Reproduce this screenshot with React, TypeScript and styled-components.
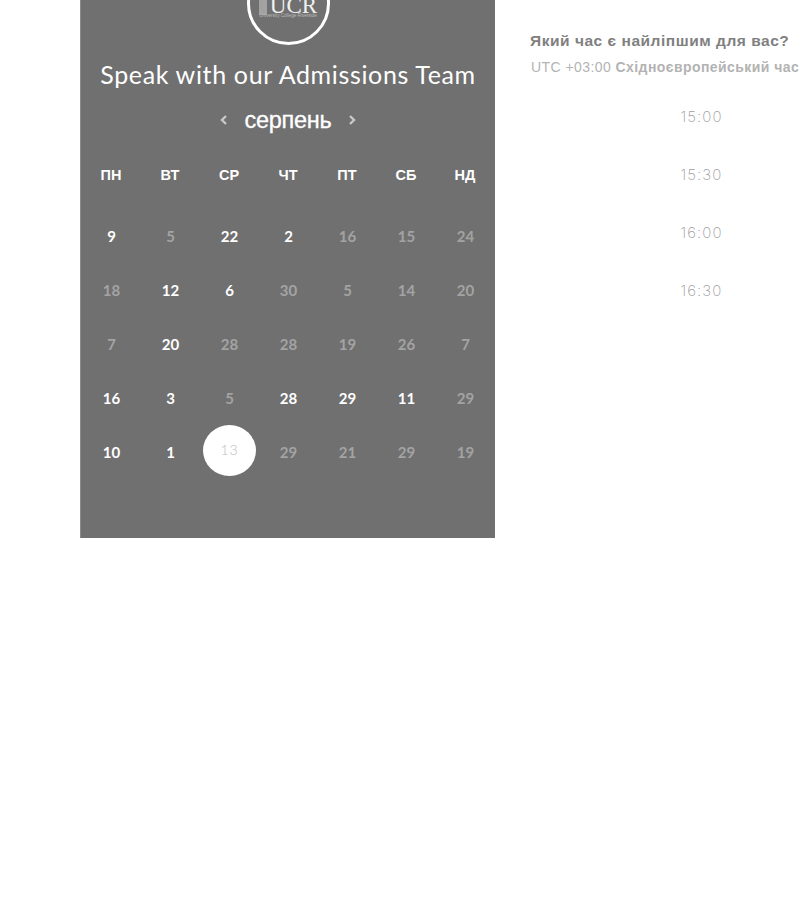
import { ReactElement } from "react";
import styled, { createGlobalStyle } from "styled-components";

const GlobalStyle = createGlobalStyle`
  html, body {
    margin: 0;
    padding: 0;
    background: #fff;
    overflow: hidden;
    height: 900px;
  }
`;

const Page = styled.div`
  display: flex;
  align-items: flex-start;
  width: 800px;
  height: 900px;
  padding-left: 80px;
  box-sizing: border-box;
  overflow: hidden;
`;

const CalendarPanel = styled.section`
  display: flex;
  flex-direction: column;
  align-items: center;
  flex: none;
  width: 415px;
  height: 538px;
  background: #707070;
  border-left: 1px solid #8a8a8a;
  box-sizing: border-box;
`;

const LogoRing = styled.div`
  display: flex;
  flex-direction: column;
  align-items: center;
  justify-content: flex-end;
  flex: none;
  width: 83px;
  height: 83px;
  margin-top: -38px;
  padding-bottom: 24px;
  border: 3px solid #fff;
  border-radius: 50%;
  box-sizing: border-box;
`;

const LogoRow = styled.div`
  display: flex;
  align-items: flex-end;
  gap: 3px;
  height: 13px;
`;

const LogoBuilding = styled.span`
  width: 8px;
  height: 15px;
  margin-bottom: -3px;
  background: #a2a2a2;
`;

const LogoLetters = styled.span`
  color: #f0f0f0;
  font: 400 23px/13px "Liberation Serif", serif;
`;

const LogoCaption = styled.span`
  margin-top: 1px;
  color: #bdbdbd;
  font: 400 4.6px/5px "Liberation Sans", sans-serif;
  white-space: nowrap;
`;

const Title = styled.h1`
  margin: 14px 0 0;
  color: #fff;
  font: 400 25px/30px Lato, sans-serif;
  letter-spacing: 0.65px;
  white-space: nowrap;
`;

const MonthBar = styled.div`
  display: flex;
  align-items: center;
  justify-content: center;
  gap: 15px;
  margin-top: 16px;
  height: 30px;
`;

const MonthName = styled.span`
  color: #fff;
  font: 400 23.5px/30px "Liberation Sans", sans-serif;
  letter-spacing: -0.3px;
  -webkit-text-stroke: 0.3px #fff;
`;

const Chevron = styled.svg`
  width: 12px;
  height: 12px;
  fill: none;
  stroke: #c8c8c8;
  stroke-width: 2.4;
`;

const DayGrid = styled.div`
  display: grid;
  grid-template-columns: repeat(7, 59px);
  justify-content: center;
  margin-top: 30px;
  margin-left: 1px;
`;

const WeekHead = styled.span`
  display: flex;
  align-items: center;
  justify-content: center;
  height: 20px;
  margin-bottom: 24px;
  padding-right: 1px;
  color: #fff;
  font: 700 14.5px/20px "Liberation Sans", sans-serif;
`;

const DayCell = styled.span<{ $active?: boolean; $selected?: boolean }>`
  display: flex;
  align-items: center;
  justify-content: center;
  height: 54px;
  color: ${({ $active }) => ($active ? "#fff" : "#a3a3a3")};
  font: 700 15px/20px Lato, sans-serif;

  ${({ $selected }) =>
    $selected &&
    `
    position: relative;
    color: #bcbcbc;
    font-weight: 300;
    font-size: 14px;
    letter-spacing: 1px;
    z-index: 0;
    padding-bottom: 4px;
    box-sizing: border-box;
    &::before {
      content: "";
      position: absolute;
      z-index: -1;
      left: 3px;
      top: 0;
      width: 53px;
      height: 51px;
      background: #fff;
      border-radius: 50%;
    }
  `}
`;

const TimeColumn = styled.section`
  display: flex;
  flex-direction: column;
  flex: none;
  width: 270px;
  margin-left: 35px;
  padding-top: 32px;
`;

const Question = styled.h2`
  margin: 0;
  color: #808080;
  font: 700 15.5px/18px "Liberation Sans", sans-serif;
  letter-spacing: 0.53px;
  white-space: nowrap;
`;

const Zone = styled.p`
  margin: 8px 0 0 1px;
  color: #b3b3b3;
  font: 400 14px/18px "Liberation Sans", sans-serif;
  letter-spacing: 0.43px;
  white-space: nowrap;

  b {
    font-weight: 700;
  }
`;

const SlotList = styled.div`
  display: flex;
  flex-direction: column;
  align-items: center;
  width: 343px;
  margin-top: 27px;
  row-gap: 30px;
`;

const Slot = styled.span`
  color: #9c9c9c;
  font: 200 15px/28px Inter, sans-serif;
  letter-spacing: 1.1px;
`;

const WEEK = ["ПН", "ВТ", "СР", "ЧТ", "ПТ", "СБ", "НД"];

const DAYS: { n: number; on?: boolean; sel?: boolean }[] = [
  { n: 9, on: true }, { n: 5 }, { n: 22, on: true }, { n: 2, on: true }, { n: 16 }, { n: 15 }, { n: 24 },
  { n: 18 }, { n: 12, on: true }, { n: 6, on: true }, { n: 30 }, { n: 5 }, { n: 14 }, { n: 20 },
  { n: 7 }, { n: 20, on: true }, { n: 28 }, { n: 28 }, { n: 19 }, { n: 26 }, { n: 7 },
  { n: 16, on: true }, { n: 3, on: true }, { n: 5 }, { n: 28, on: true }, { n: 29, on: true }, { n: 11, on: true }, { n: 29 },
  { n: 10, on: true }, { n: 1, on: true }, { n: 13, sel: true }, { n: 29 }, { n: 21 }, { n: 29 }, { n: 19 },
];

const SLOTS = ["15:00", "15:30", "16:00", "16:30"];

export default function App(): ReactElement {
  return (
    <Page>
      <GlobalStyle />
      <CalendarPanel>
        <LogoRing>
          <LogoRow>
            <LogoBuilding />
            <LogoLetters>UCR</LogoLetters>
          </LogoRow>
          <LogoCaption>University College Riverside</LogoCaption>
        </LogoRing>
        <Title>Speak with our Admissions Team</Title>
        <MonthBar>
          <Chevron viewBox="0 0 12 12">
            <path d="M8 2 4 6l4 4" />
          </Chevron>
          <MonthName>серпень</MonthName>
          <Chevron viewBox="0 0 12 12">
            <path d="M4 2l4 4-4 4" />
          </Chevron>
        </MonthBar>
        <DayGrid>
          {WEEK.map((w) => (
            <WeekHead key={w}>{w}</WeekHead>
          ))}
          {DAYS.map((d, i) => (
            <DayCell key={i} $active={d.on} $selected={d.sel}>
              {d.n}
            </DayCell>
          ))}
        </DayGrid>
      </CalendarPanel>
      <TimeColumn>
        <Question>Який час є найліпшим для вас?</Question>
        <Zone>
          UTC +03:00 <b>Східноєвропейський час</b>
        </Zone>
        <SlotList>
          {SLOTS.map((s) => (
            <Slot key={s}>{s}</Slot>
          ))}
        </SlotList>
      </TimeColumn>
    </Page>
  );
}
